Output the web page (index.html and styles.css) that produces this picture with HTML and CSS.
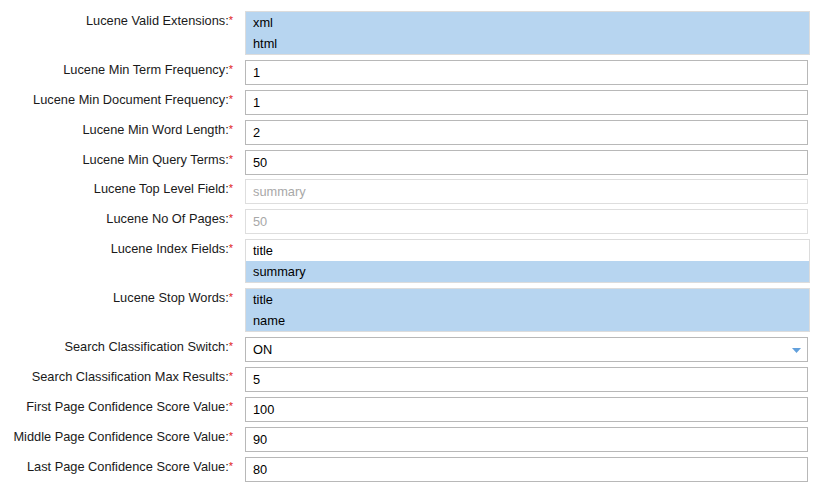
FILE: index.html
```html
<!DOCTYPE html>
<html>
<head>
<meta charset="utf-8">
<link rel="stylesheet" href="styles.css">
</head>
<body>
<form class="form">
  <div class="row">
    <label class="label">Lucene Valid Extensions:<span class="req">*</span></label>
    <div class="listbox">
      <div class="opt sel">xml</div>
      <div class="opt sel">html</div>
    </div>
  </div>
  <div class="row">
    <label class="label">Lucene Min Term Frequency:<span class="req">*</span></label>
    <div class="input">1</div>
  </div>
  <div class="row">
    <label class="label">Lucene Min Document Frequency:<span class="req">*</span></label>
    <div class="input">1</div>
  </div>
  <div class="row">
    <label class="label">Lucene Min Word Length:<span class="req">*</span></label>
    <div class="input">2</div>
  </div>
  <div class="row">
    <label class="label">Lucene Min Query Terms:<span class="req">*</span></label>
    <div class="input">50</div>
  </div>
  <div class="row">
    <label class="label">Lucene Top Level Field:<span class="req">*</span></label>
    <div class="input disabled">summary</div>
  </div>
  <div class="row">
    <label class="label">Lucene No Of Pages:<span class="req">*</span></label>
    <div class="input disabled">50</div>
  </div>
  <div class="row">
    <label class="label">Lucene Index Fields:<span class="req">*</span></label>
    <div class="listbox">
      <div class="opt">title</div>
      <div class="opt sel">summary</div>
    </div>
  </div>
  <div class="row">
    <label class="label">Lucene Stop Words:<span class="req">*</span></label>
    <div class="listbox">
      <div class="opt sel">title</div>
      <div class="opt sel">name</div>
    </div>
  </div>
  <div class="row">
    <label class="label">Search Classification Switch:<span class="req">*</span></label>
    <div class="input select">ON<svg class="caret" width="9" height="5" viewBox="0 0 9 5"><path d="M0 0H9L4.5 5Z" fill="#62a0dc"/></svg></div>
  </div>
  <div class="row">
    <label class="label">Search Classification Max Results:<span class="req">*</span></label>
    <div class="input">5</div>
  </div>
  <div class="row">
    <label class="label">First Page Confidence Score Value:<span class="req">*</span></label>
    <div class="input">100</div>
  </div>
  <div class="row">
    <label class="label">Middle Page Confidence Score Value:<span class="req">*</span></label>
    <div class="input">90</div>
  </div>
  <div class="row">
    <label class="label">Last Page Confidence Score Value:<span class="req">*</span></label>
    <div class="input">80</div>
  </div>
</form>
</body>
</html>
```

FILE: styles.css
```css
html, body {
  margin: 0;
  padding: 0;
  background: #fff;
}
body {
  font-family: "Liberation Sans", Arial, Helvetica, sans-serif;
  font-size: 12.8px;
  color: #111;
}
.form {
  padding-top: 11px;
  display: flex;
  flex-direction: column;
  gap: 4.9px;
}
.row {
  display: flex;
  align-items: flex-start;
}
.label {
  width: 233px;
  flex: none;
  text-align: right;
  line-height: 15px;
  padding-top: 2px;
  color: #1a1a1a;
}
.req {
  color: #e02020;
  font-size: 11px;
  vertical-align: 1px;
}
.input {
  box-sizing: border-box;
  margin-left: 12px;
  width: 563px;
  height: 25px;
  border: 1px solid #b8b8b8;
  padding: 0 7px;
  line-height: 23px;
  color: #000;
  background: #fff;
}
.input.disabled {
  border-color: #dedede;
  color: #a8a8a8;
}
.select {
  display: flex;
  align-items: center;
  justify-content: space-between;
  padding-right: 6px;
}
.caret {
  display: block;
  margin-top: 1px;
}
.listbox {
  box-sizing: border-box;
  margin-left: 12px;
  width: 565px;
  height: 44px;
  border: 1px solid #dcdcdc;
  background: #fff;
}
.opt {
  height: 21px;
  line-height: 21px;
  padding-left: 7px;
  color: #000;
}
.opt.sel {
  background: #b7d5f0;
}
```
